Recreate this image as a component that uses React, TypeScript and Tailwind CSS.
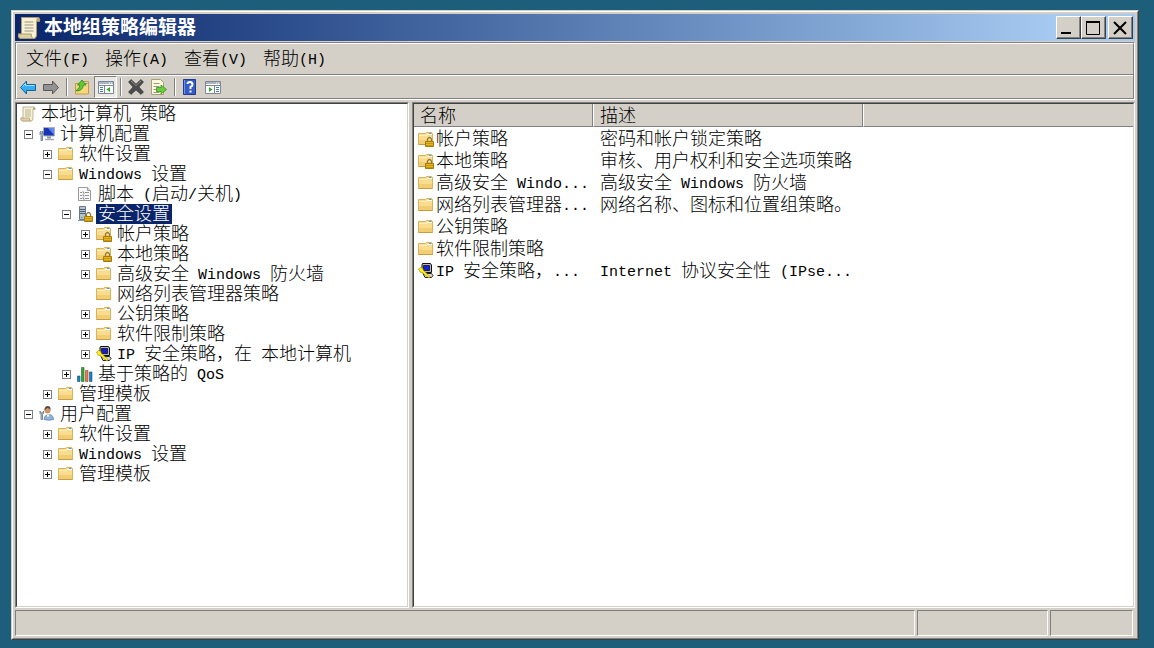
/**
 * Local Group Policy Editor window
 * Title bar, menu, toolbar, policy tree, detail list and status bar
 */

import { useState } from "react";
import type { ReactNode } from "react";

type IconName =
  | "scroll"
  | "computer"
  | "folder"
  | "folderLock"
  | "script"
  | "server"
  | "ipsec"
  | "chart"
  | "user";

interface TreeNode {
  id: string;
  label: string;
  icon: IconName;
  children?: TreeNode[];
  // Has children that are not loaded yet
  lazy?: boolean;
}

interface PolicyItem {
  icon: IconName;
  name: string;
  description: string;
}

const TREE: TreeNode = {
  id: "root",
  label: "本地计算机 策略",
  icon: "scroll",
  children: [
    {
      id: "computer",
      label: "计算机配置",
      icon: "computer",
      children: [
        { id: "c-software", label: "软件设置", icon: "folder", lazy: true },
        {
          id: "c-windows",
          label: "Windows 设置",
          icon: "folder",
          children: [
            { id: "scripts", label: "脚本 (启动/关机)", icon: "script" },
            {
              id: "security",
              label: "安全设置",
              icon: "server",
              children: [
                { id: "account", label: "帐户策略", icon: "folderLock", lazy: true },
                { id: "local", label: "本地策略", icon: "folderLock", lazy: true },
                { id: "firewall", label: "高级安全 Windows 防火墙", icon: "folder", lazy: true },
                { id: "network", label: "网络列表管理器策略", icon: "folder" },
                { id: "publickey", label: "公钥策略", icon: "folder", lazy: true },
                { id: "restrict", label: "软件限制策略", icon: "folder", lazy: true },
                { id: "ipsec", label: "IP 安全策略，在 本地计算机", icon: "ipsec", lazy: true },
              ],
            },
            { id: "qos", label: "基于策略的 QoS", icon: "chart", lazy: true },
          ],
        },
        { id: "c-templates", label: "管理模板", icon: "folder", lazy: true },
      ],
    },
    {
      id: "user",
      label: "用户配置",
      icon: "user",
      children: [
        { id: "u-software", label: "软件设置", icon: "folder", lazy: true },
        { id: "u-windows", label: "Windows 设置", icon: "folder", lazy: true },
        { id: "u-templates", label: "管理模板", icon: "folder", lazy: true },
      ],
    },
  ],
};

const ITEMS: PolicyItem[] = [
  { icon: "folderLock", name: "帐户策略", description: "密码和帐户锁定策略" },
  { icon: "folderLock", name: "本地策略", description: "审核、用户权利和安全选项策略" },
  { icon: "folder", name: "高级安全 Windo...", description: "高级安全 Windows 防火墙" },
  { icon: "folder", name: "网络列表管理器...", description: "网络名称、图标和位置组策略。" },
  { icon: "folder", name: "公钥策略", description: "" },
  { icon: "folder", name: "软件限制策略", description: "" },
  { icon: "ipsec", name: "IP 安全策略，...", description: "Internet 协议安全性 (IPse..." },
];

const MENUS = ["文件(F)", "操作(A)", "查看(V)", "帮助(H)"];

const LEVEL_PADDING = ["pl-[3px]", "pl-[7px]", "pl-[26px]", "pl-[45px]", "pl-[64px]"];

// Latin runs are half the width of a Chinese character
function Text({ children }: { children: string }) {
  return (
    <span className="whitespace-pre">
      {children.split(/([\x20-\x7e]+)/).map((part, i) =>
        i % 2 === 1 ? (
          <span key={i} className="align-middle font-['Liberation_Mono',monospace] text-[15px] leading-none">
            {part}
          </span>
        ) : (
          part
        )
      )}
    </span>
  );
}

function Svg({ children, className = "size-4" }: { children: ReactNode; className?: string }) {
  return (
    <svg viewBox="0 0 16 16" className={`${className} shrink-0`} aria-hidden="true">
      {children}
    </svg>
  );
}

function FolderShape() {
  return (
    <>
      <path d="M.5 2.500h7l1-1h5l1 1v11H.5z" fill="#f9dc8e" stroke="#d9b35a" />
      <path d="M1 9h13v4H1z" fill="#f1cd74" />
      <path d="M9 3.500h5" stroke="#fff" />
      <path d="M11 2.500h2.500" stroke="#4d9ad8" />
      <path d="M1 4.500h8" stroke="#fff0bd" />
      <path d="M.5 13.500h14" stroke="#c99d3e" />
    </>
  );
}

function LockShape() {
  return (
    <>
      <path d="M9.500 10V8q2-3 4 0v2" fill="none" stroke="#8f7a38" strokeWidth="1.300" />
      <path d="M7.500 10.500h8v5h-8z" fill="#e5b51d" stroke="#a87a0b" />
      <path d="M8 12.500h7M8 14.500h7" stroke="#b98a10" strokeWidth=".7" />
    </>
  );
}

function ItemIcon({ name, className }: { name: IconName; className?: string }) {
  switch (name) {
    case "folder":
      return (
        <Svg className={className}>
          <FolderShape />
        </Svg>
      );
    case "folderLock":
      return (
        <Svg className={className}>
          <FolderShape />
          <LockShape />
        </Svg>
      );
    case "scroll":
      return (
        <Svg className={className}>
          <path d="M3 1h11q1.500.5 1 2.500h-2V12q0 3-2 3H2.500Q.5 14.500 1 12h2z" fill="#f8f1d2" stroke="#a79a74" strokeWidth=".7" />
          <path d="M13 1.500h1.500q1 .5.500 2H13z" fill="#b5a578" />
          <path d="M1 12h8.500q-.5 2.500 1.500 3H2.500Q.5 14.500 1 12z" fill="#dfd1a1" stroke="#a79a74" strokeWidth=".6" />
          <path d="M5 4h6M5 6h6M5 8h6M5 10h6" stroke="#9b9685" strokeWidth=".7" />
        </Svg>
      );
    case "computer":
      return (
        <Svg className={className}>
          <path d="M4.500 1.500h11v8.500h-11z" fill="#1a36b4" stroke="#a9b2bd" />
          <path d="M9 2h6v7z" fill="#5f87ea" />
          <path d="M8 10.500h4v2H8z" fill="#8d969f" />
          <path d="M6 13.500h9" stroke="#a3abb4" strokeWidth="1.500" />
          <path d="M1 6.500 2 5v3h1.500V5l1 1.500v2l-1 1v5H2v-5l-1-1z" fill="#b9cbdb" stroke="#5a7288" strokeWidth=".8" />
        </Svg>
      );
    case "script":
      return (
        <Svg className={className}>
          <path d="M1.500 1.500h9l3 3v10h-12z" fill="#fafafa" stroke="#9b9b9b" />
          <path d="M10.500 1.500v3h3" fill="#ddd" stroke="#9b9b9b" />
          <path d="M3 6.500h2l1-1 1 2 1-1h4M3 9.500h2l1-1 1 2 1-1h4M3 12.500h2l1-1 1 2 1-1h4" fill="none" stroke="#777" strokeWidth=".8" />
        </Svg>
      );
    case "server":
      return (
        <Svg className={className}>
          <path d="M2.500.5h6v13h-6z" fill="#b6c2cd" stroke="#67798a" />
          <path d="M3 3.500h5M3 5.500h5M3 7.500h5" stroke="#4d6274" />
          <path d="M4 11.500h1.500" stroke="#35b845" />
          <path d="M1 14.500h7" stroke="#8494a2" />
          <LockShape />
        </Svg>
      );
    case "ipsec":
      return (
        <Svg className={className}>
          <path d="M4.500.5h8l1 1.500v7.500h-9.500V2z" fill="#b9b9b9" stroke="#111" />
          <path d="M5.500 2.500h6v5h-6z" fill="#1420d8" stroke="#111" strokeWidth=".8" />
          <path d="M5 10.500h8.500l1.500 2-1.500 2H7z" fill="#dadada" stroke="#222" />
          <path d="m.5 6 2-1.500 2.500 1V7l7 6.500-1 1.500L4 9.500 2 9z" fill="#ffee24" stroke="#a39a10" strokeWidth=".7" />
        </Svg>
      );
    case "chart":
      return (
        <Svg className={className}>
          <path d="M.5 10h2.500v5.500H.5z" fill="#1783c6" stroke="#0d507c" strokeWidth=".6" />
          <path d="M4.500 1.500H7v14H4.500z" fill="#35a635" stroke="#1c661c" strokeWidth=".6" />
          <path d="M8.500 4.500H11v11H8.500z" fill="#f27a50" stroke="#943b1c" strokeWidth=".6" />
          <path d="M12.500 6H15v9.500h-2.500z" fill="#1783c6" stroke="#0d507c" strokeWidth=".6" />
        </Svg>
      );
    case "user":
      return (
        <Svg className={className}>
          <path d="M5 13.500q0-4 4-5 5.500 0 5.500 5-5 1.500-9.500 0z" fill="#93b4d9" stroke="#5f83ab" strokeWidth=".8" />
          <path d="m7.500 8.500 1.500 3 1.500-3z" fill="#fff" />
          <circle cx="8.500" cy="4.500" r="3" fill="#c9976e" />
          <path d="M5.500 4.500q-.5-4 3-4.500 3.500 0 3 4-1-2-3.500-2z" fill="#59493d" />
          <path d="M1 5v2.500l1 1v5h1.500v-5l1-1V5L3.500 7H2z" fill="#a8b5c0" stroke="#596b7a" strokeWidth=".7" />
        </Svg>
      );
  }
}

/* Toolbar drawings */

function ArrowIcon({ forward = false }: { forward?: boolean }) {
  return (
    <Svg>
      {forward ? (
        <path d="M15.500 8.500 9.500 2v3.500H.5v6h9V15z" fill="#929292" stroke="#585858" />
      ) : (
        <>
          <path d="M.5 8.500 6.500 2v3.500h9v6h-9V15z" fill="#35aef0" stroke="#17619e" />
          <path d="M2.500 7.500 5.500 4.500v2h9" fill="none" stroke="#a3e1ff" />
        </>
      )}
    </Svg>
  );
}

function UpFolderIcon() {
  return (
    <Svg>
      <path d="M1.500 4.500h6l1.500-2h5.500v12.500h-13z" fill="#f6d77e" stroke="#c79d3c" />
      <path d="M11 4.500h2.500" stroke="#4d9ad8" />
      <path d="M2.500 11q3-1 3.500-5H3.500L8 1l4 5H9.500q-1 6-7 6z" fill="#5ccc34" stroke="#29871a" strokeWidth=".8" />
    </Svg>
  );
}

function PaneIcon({ flip = false }: { flip?: boolean }) {
  return (
    <Svg>
      <path d="M.5 2.500h15v12H.5z" fill="#fff" stroke="#7b8794" />
      <path d="M1 3h14v2H1z" fill="#a8b5c2" />
      <path d="M11 4h1M13 4h1" stroke="#fff" />
      <path d="M1 6.500h14" stroke="#7b8794" />
      {flip ? (
        <>
          <path d="M9.500 7v7" stroke="#7b8794" />
          <path d="M11 8.500h3M11 10.500h3M11 12.500h3" stroke="#3f7db3" />
          <path d="M4 8v5l3.500-2.500z" fill="#34a52c" />
        </>
      ) : (
        <>
          <path d="M6.500 7v7" stroke="#7b8794" />
          <path d="M2 8.500h3M2 10.500h3M2 12.500h3" stroke="#3f7db3" />
          <path d="M12 8v5l-3.500-2.500z" fill="#34a52c" />
        </>
      )}
    </Svg>
  );
}

function DeleteIcon() {
  return (
    <Svg>
      <path d="M3 .5 8 5l5-4.500L15.500 3 11 8l4.500 5-2.500 2.500L8 11l-5 4.500L.5 13 5 8 .5 3z" fill="#4c4c4c" stroke="#343434" strokeWidth=".6" />
      <path d="M3 2 8 6.500 13 2" fill="none" stroke="#8b8b8b" />
    </Svg>
  );
}

function ExportIcon() {
  return (
    <Svg>
      <path d="M.5.5h9l3 3v12H.5z" fill="#fff8dc" stroke="#aaa078" />
      <path d="M2.500 4.500h6M2.500 7.500h6M2.500 10.500h3M2.500 13.500h6" stroke="#7d7d73" strokeWidth=".8" />
      <path d="M5.500 8.500H10V6l5.500 4.500L10 15v-2.500H5.500z" fill="#69ce3c" stroke="#35951c" strokeWidth=".8" />
    </Svg>
  );
}

function HelpIcon() {
  return (
    <Svg>
      <path d="M1.500.5h12v15h-12z" fill="#345cc8" stroke="#203b8a" />
      <path d="M2.500 1v14" stroke="#7092e8" />
      <path d="M5.500 5q0-2 2.500-2t2.500 2.500Q10.500 7 8.500 8v2" fill="none" stroke="#fff" strokeWidth="2" />
      <path d="M7.500 11.500h2v2h-2z" fill="#fff" />
    </Svg>
  );
}

function ToolButton({ label, active = false, children }: { label: string; active?: boolean; children: ReactNode }) {
  return (
    <button
      aria-label={label}
      aria-pressed={active}
      className={
        active
          ? "flex h-[22px] w-[23px] items-center border border-t-[#808080] border-r-white border-b-white border-l-[#808080] bg-[#ebe9e5] pl-[3px]"
          : "flex h-[22px] w-[23px] items-center pl-[3px]"
      }
    >
      {children}
    </button>
  );
}

function Separator() {
  return <div className="mx-[3px] h-[18px] w-[2px] border-r border-l border-r-white border-l-[#808080]" />;
}

function CaptionButton({ label, children }: { label: string; children: ReactNode }) {
  return (
    <button
      aria-label={label}
      className="h-[23px] w-[25px] border border-t-white border-r-[#404040] border-b-[#404040] border-l-white bg-[#d4d0c8]"
    >
      <span className="flex h-full w-full items-center justify-center border-r border-b border-[#808080]">
        <svg viewBox="0 0 16 16" className="size-4" fill="none" stroke="#000" aria-hidden="true">
          {children}
        </svg>
      </span>
    </button>
  );
}

interface TreeRowProps {
  node: TreeNode;
  level: number;
  collapsed: string[];
  selected: string;
  onToggle: (id: string) => void;
  onSelect: (id: string) => void;
}

function TreeRow({ node, level, collapsed, selected, onToggle, onSelect }: TreeRowProps) {
  const open = !!node.children && !collapsed.includes(node.id);
  const expandable = !!node.children || node.lazy;

  return (
    <li role="treeitem" aria-expanded={expandable ? open : undefined} aria-selected={selected === node.id}>
      <div className={`flex h-5 items-center ${LEVEL_PADDING[level]}`}>
        {level > 0 && (
          <span className="mr-[6px] flex w-[9px] shrink-0">
            {expandable && (
              <button
                aria-label={open ? "折叠" : "展开"}
                onClick={() => onToggle(node.id)}
                className="size-[9px] border border-[#808080] bg-white"
              >
                <svg viewBox="0 0 7 7" className="size-[7px]" stroke="#000" aria-hidden="true">
                  <path d="M1 3.500h5" />
                  {!open && <path d="M3.500 1v5" />}
                </svg>
              </button>
            )}
          </span>
        )}
        <ItemIcon name={node.icon} />
        <button
          onClick={() => onSelect(node.id)}
          className={
            selected === node.id
              ? "ml-[3px] h-5 bg-[#0a246a] px-[2px] leading-5 text-white"
              : "ml-[3px] h-5 px-[2px] leading-5"
          }
        >
          <Text>{node.label}</Text>
        </button>
      </div>
      {open && (
        <ul role="group">
          {node.children?.map((child) => (
            <TreeRow
              key={child.id}
              node={child}
              level={level + 1}
              collapsed={collapsed}
              selected={selected}
              onToggle={onToggle}
              onSelect={onSelect}
            />
          ))}
        </ul>
      )}
    </li>
  );
}

// Two-pixel sunken frame around the white panes
function Pane({ className, children }: { className: string; children: ReactNode }) {
  return (
    <div className={`border border-t-[#808080] border-r-white border-b-white border-l-[#808080] ${className}`}>
      <div className="h-full border border-t-[#404040] border-r-[#d4d0c8] border-b-[#d4d0c8] border-l-[#404040] bg-white">
        {children}
      </div>
    </div>
  );
}

function App() {
  const [collapsed, setCollapsed] = useState<string[]>([]);
  const [selected, setSelected] = useState("security");

  const handleToggle = (id: string) => {
    setCollapsed((prev) => (prev.includes(id) ? prev.filter((item) => item !== id) : [...prev, id]));
  };

  return (
    <div className="flex min-h-screen flex-col bg-[#1d5f7a] pt-[10px] pr-[15px] pb-2 pl-[11px] font-['Liberation_Serif','Noto_Sans_CJK_SC',sans-serif] text-lg font-light text-black">
      <div className="flex flex-1 flex-col border border-t-[#d4d0c8] border-r-[#404040] border-b-[#404040] border-l-[#d4d0c8]">
        <div className="flex flex-1 flex-col border border-t-white border-r-[#808080] border-b-[#808080] border-l-white bg-[#d4d0c8] p-[2px]">
          {/* Title bar */}
          <header className="flex h-[27px] items-center bg-linear-to-r from-[#0a246a] to-[#a6caf0] to-93% pr-[2px] pl-[2px]">
            <ItemIcon name="scroll" className="size-6" />
            <h1 className="ml-[3px] flex-1 text-[19px] leading-6 font-bold text-white">本地组策略编辑器</h1>
            <CaptionButton label="最小化">
              <path d="M1 14h10" strokeWidth="2" />
            </CaptionButton>
            <CaptionButton label="最大化">
              <path d="M1.500 3v12.500h13V3" />
              <path d="M1 3h14" strokeWidth="2" />
            </CaptionButton>
            <div className="ml-[2px] flex">
              <CaptionButton label="关闭">
                <path d="m2 3 12 12M14 3 2 15" strokeWidth="2" />
              </CaptionButton>
            </div>
          </header>

          {/* Menu and toolbar */}
          <div className="mt-px border border-t-[#808080] border-r-white border-b-white border-l-[#808080]">
            <div className="border border-t-white border-r-[#808080] border-b-[#808080] border-l-white">
              <nav className="flex h-[31px] items-center border-b border-[#808080] pl-px">
                {MENUS.map((menu) => (
                  <button key={menu} className="px-2 leading-6">
                    <Text>{menu}</Text>
                  </button>
                ))}
              </nav>
              <div className="flex h-[23px] items-center border-t border-white">
                <ToolButton label="后退">
                  <ArrowIcon />
                </ToolButton>
                <ToolButton label="前进">
                  <ArrowIcon forward />
                </ToolButton>
                <Separator />
                <ToolButton label="上一级">
                  <UpFolderIcon />
                </ToolButton>
                <ToolButton label="显示/隐藏控制台树" active>
                  <PaneIcon />
                </ToolButton>
                <Separator />
                <ToolButton label="删除">
                  <DeleteIcon />
                </ToolButton>
                <ToolButton label="导出列表">
                  <ExportIcon />
                </ToolButton>
                <Separator />
                <ToolButton label="帮助">
                  <HelpIcon />
                </ToolButton>
                <ToolButton label="显示/隐藏操作窗格">
                  <PaneIcon flip />
                </ToolButton>
              </div>
            </div>
          </div>

          {/* Tree and list */}
          <main className="mt-[2px] flex flex-1 gap-[3px]">
            <Pane className="w-[394px] shrink-0">
              <ul role="tree">
                <TreeRow
                  node={TREE}
                  level={0}
                  collapsed={collapsed}
                  selected={selected}
                  onToggle={handleToggle}
                  onSelect={setSelected}
                />
              </ul>
            </Pane>
            <Pane className="min-w-0 flex-1">
              <table className="w-full table-fixed border-separate border-spacing-0 text-left leading-[22px] whitespace-nowrap">
                <thead className="bg-[#d4d0c8] leading-5">
                  <tr>
                    <th className="h-[23px] w-[179px] border-r border-b border-[#808080] p-0 pt-[2px] pl-[6px] font-light">
                      名称
                    </th>
                    <th className="w-[270px] border-r border-b border-l border-[#808080] border-l-white p-0 pt-[2px] pl-[6px] font-light">
                      描述
                    </th>
                    <th className="border-b border-l border-[#808080] border-l-white p-0" aria-label="空" />
                  </tr>
                </thead>
                <tbody>
                  {ITEMS.map((item) => (
                    <tr key={item.name}>
                      <td className="h-[22px] p-0 pl-1">
                        <div className="flex h-[22px] items-center gap-[2px] pt-[2px]">
                          <ItemIcon name={item.icon} />
                          <Text>{item.name}</Text>
                        </div>
                      </td>
                      <td className="p-0 pl-[7px]" colSpan={2}>
                        <div className="flex h-[22px] items-center pt-[2px]">
                          <Text>{item.description}</Text>
                        </div>
                      </td>
                    </tr>
                  ))}
                </tbody>
              </table>
            </Pane>
          </main>

          {/* Status bar */}
          <footer className="mt-[2px] flex h-[26px] gap-[2px] pr-[2px]">
            <div className="flex-1 border border-t-[#808080] border-r-white border-b-white border-l-[#808080]" />
            <div className="w-[131px] border border-t-[#808080] border-r-white border-b-white border-l-[#808080]" />
            <div className="w-[83px] border border-t-[#808080] border-r-white border-b-white border-l-[#808080]" />
          </footer>
        </div>
      </div>
    </div>
  );
}

export default App;
